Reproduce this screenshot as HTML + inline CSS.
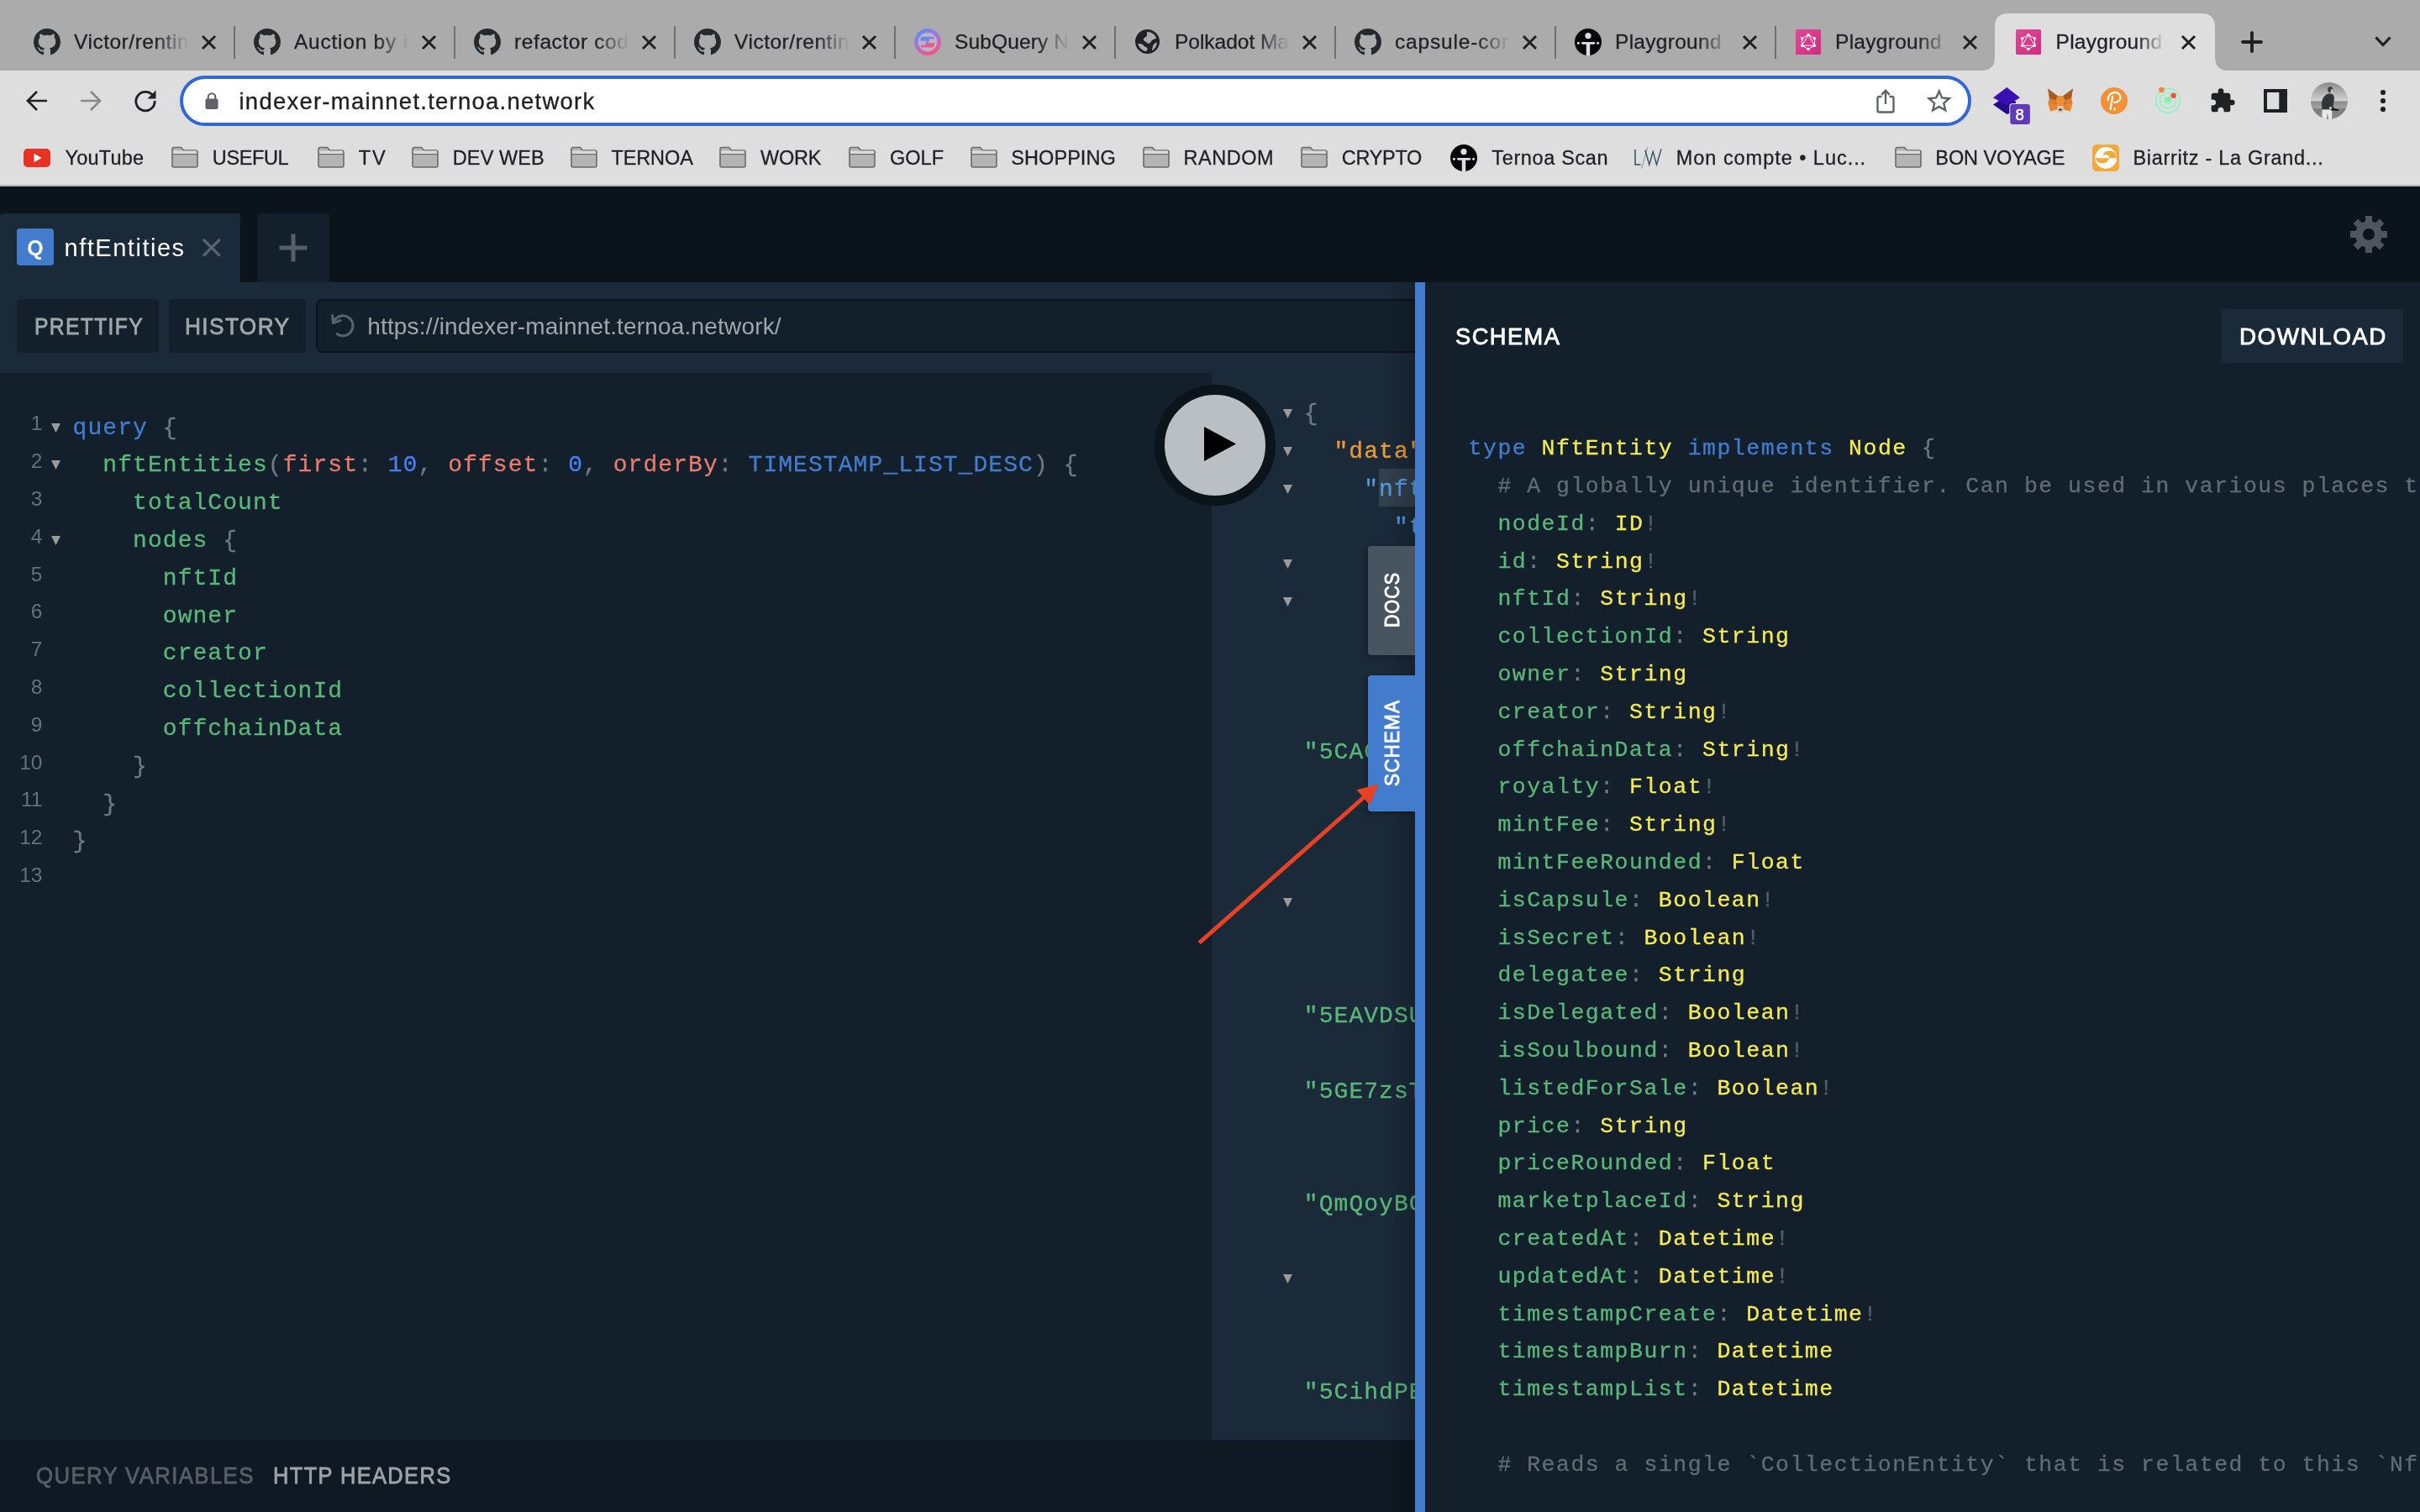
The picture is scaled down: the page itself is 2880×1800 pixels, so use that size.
<!DOCTYPE html>
<html lang="en"><head><meta charset="utf-8"><title>Playground - indexer-mainnet.ternoa.network</title>
<style>
html,body{margin:0;padding:0;width:2880px;height:1800px;overflow:hidden;background:#13202c;}
body{font-family:"Liberation Sans",sans-serif;position:relative;}
body div{position:absolute;white-space:pre;box-sizing:border-box;}
body svg{position:absolute;overflow:visible;}
.code{font-family:"Liberation Mono", monospace;-webkit-text-stroke:0.3px;}
#root{left:0;top:0;width:2880px;height:1800px;will-change:transform;transform-origin:0 0;}
@media (max-width:1600px){html,body{width:1440px;height:900px;}#root{transform:scale(0.5);}}
</style></head><body><div id="root">
<div style="left:0px;top:0px;width:2880px;height:84px;background:#ababab;"></div>
<div style="left:0px;top:84px;width:2880px;height:136px;background:#dedede;"></div>
<div style="left:0px;top:220px;width:2880px;height:2px;background:#b3b3b3;"></div>
<svg style="left:0;top:0" width="2880" height="84"><path d="M2358 84 Q2374 84 2374 68 V32 Q2374 16 2390 16 H2620 Q2636 16 2636 32 V68 Q2636 84 2652 84 Z" fill="#dedede"/></svg>
<svg style="left:39.5px;top:33.6px" width="32" height="32" viewBox="0 0 16 16"><path fill="#24292e" d="M8 0C3.58 0 0 3.58 0 8c0 3.54 2.29 6.53 5.47 7.59.4.07.55-.17.55-.38 0-.19-.01-.82-.01-1.49-2.01.37-2.53-.49-2.69-.94-.09-.23-.48-.94-.82-1.13-.28-.15-.68-.52-.01-.53.63-.01 1.08.58 1.23.82.72 1.21 1.87.87 2.33.66.07-.52.28-.87.51-1.07-1.78-.2-3.64-.89-3.64-3.95 0-.87.31-1.59.82-2.15-.08-.2-.36-1.02.08-2.12 0 0 .67-.21 2.2.82.64-.18 1.32-.27 2-.27.68 0 1.36.09 2 .27 1.53-1.04 2.2-.82 2.2-.82.44 1.1.16 1.92.08 2.12.51.56.82 1.27.82 2.15 0 3.07-1.87 3.75-3.65 3.95.29.25.54.73.54 1.48 0 1.07-.01 1.93-.01 2.2 0 .21.15.46.55.38A8.013 8.013 0 0016 8c0-4.42-3.58-8-8-8z"/></svg>
<div style="left:88.0px;top:38.1px;font-size:24.5px;line-height:24.5px;color:#1f2023;letter-spacing:0.52px;-webkit-text-stroke:0.3px;">Victor/rentin</div>
<div style="left:184.6px;top:34px;width:40px;height:34px;background:linear-gradient(90deg,rgba(171,171,171,0),rgba(171,171,171,1));"></div>
<svg style="left:240.0px;top:41.5px" width="17.0" height="17.0" viewBox="-8.5 -8.5 17.0 17.0"><path d="M-7.5 -7.5L7.5 7.5M7.5 -7.5L-7.5 7.5" stroke="#1f2023" stroke-width="2.9" fill="none"/></svg>
<div style="left:278px;top:31px;width:2px;height:39px;background:#6f6f6f;"></div>
<svg style="left:301.5px;top:33.6px" width="32" height="32" viewBox="0 0 16 16"><path fill="#24292e" d="M8 0C3.58 0 0 3.58 0 8c0 3.54 2.29 6.53 5.47 7.59.4.07.55-.17.55-.38 0-.19-.01-.82-.01-1.49-2.01.37-2.53-.49-2.69-.94-.09-.23-.48-.94-.82-1.13-.28-.15-.68-.52-.01-.53.63-.01 1.08.58 1.23.82.72 1.21 1.87.87 2.33.66.07-.52.28-.87.51-1.07-1.78-.2-3.64-.89-3.64-3.95 0-.87.31-1.59.82-2.15-.08-.2-.36-1.02.08-2.12 0 0 .67-.21 2.2.82.64-.18 1.32-.27 2-.27.68 0 1.36.09 2 .27 1.53-1.04 2.2-.82 2.2-.82.44 1.1.16 1.92.08 2.12.51.56.82 1.27.82 2.15 0 3.07-1.87 3.75-3.65 3.95.29.25.54.73.54 1.48 0 1.07-.01 1.93-.01 2.2 0 .21.15.46.55.38A8.013 8.013 0 0016 8c0-4.42-3.58-8-8-8z"/></svg>
<div style="left:350.0px;top:38.1px;font-size:24.5px;line-height:24.5px;color:#1f2023;letter-spacing:0.76px;-webkit-text-stroke:0.3px;">Auction by i</div>
<div style="left:446.6px;top:34px;width:40px;height:34px;background:linear-gradient(90deg,rgba(171,171,171,0),rgba(171,171,171,1));"></div>
<svg style="left:502.0px;top:41.5px" width="17.0" height="17.0" viewBox="-8.5 -8.5 17.0 17.0"><path d="M-7.5 -7.5L7.5 7.5M7.5 -7.5L-7.5 7.5" stroke="#1f2023" stroke-width="2.9" fill="none"/></svg>
<div style="left:540px;top:31px;width:2px;height:39px;background:#6f6f6f;"></div>
<svg style="left:563.5px;top:33.6px" width="32" height="32" viewBox="0 0 16 16"><path fill="#24292e" d="M8 0C3.58 0 0 3.58 0 8c0 3.54 2.29 6.53 5.47 7.59.4.07.55-.17.55-.38 0-.19-.01-.82-.01-1.49-2.01.37-2.53-.49-2.69-.94-.09-.23-.48-.94-.82-1.13-.28-.15-.68-.52-.01-.53.63-.01 1.08.58 1.23.82.72 1.21 1.87.87 2.33.66.07-.52.28-.87.51-1.07-1.78-.2-3.64-.89-3.64-3.95 0-.87.31-1.59.82-2.15-.08-.2-.36-1.02.08-2.12 0 0 .67-.21 2.2.82.64-.18 1.32-.27 2-.27.68 0 1.36.09 2 .27 1.53-1.04 2.2-.82 2.2-.82.44 1.1.16 1.92.08 2.12.51.56.82 1.27.82 2.15 0 3.07-1.87 3.75-3.65 3.95.29.25.54.73.54 1.48 0 1.07-.01 1.93-.01 2.2 0 .21.15.46.55.38A8.013 8.013 0 0016 8c0-4.42-3.58-8-8-8z"/></svg>
<div style="left:612.0px;top:38.1px;font-size:24.5px;line-height:24.5px;color:#1f2023;letter-spacing:0.60px;-webkit-text-stroke:0.3px;">refactor cod</div>
<div style="left:708.6px;top:34px;width:40px;height:34px;background:linear-gradient(90deg,rgba(171,171,171,0),rgba(171,171,171,1));"></div>
<svg style="left:764.0px;top:41.5px" width="17.0" height="17.0" viewBox="-8.5 -8.5 17.0 17.0"><path d="M-7.5 -7.5L7.5 7.5M7.5 -7.5L-7.5 7.5" stroke="#1f2023" stroke-width="2.9" fill="none"/></svg>
<div style="left:802px;top:31px;width:2px;height:39px;background:#6f6f6f;"></div>
<svg style="left:825.5px;top:33.6px" width="32" height="32" viewBox="0 0 16 16"><path fill="#24292e" d="M8 0C3.58 0 0 3.58 0 8c0 3.54 2.29 6.53 5.47 7.59.4.07.55-.17.55-.38 0-.19-.01-.82-.01-1.49-2.01.37-2.53-.49-2.69-.94-.09-.23-.48-.94-.82-1.13-.28-.15-.68-.52-.01-.53.63-.01 1.08.58 1.23.82.72 1.21 1.87.87 2.33.66.07-.52.28-.87.51-1.07-1.78-.2-3.64-.89-3.64-3.95 0-.87.31-1.59.82-2.15-.08-.2-.36-1.02.08-2.12 0 0 .67-.21 2.2.82.64-.18 1.32-.27 2-.27.68 0 1.36.09 2 .27 1.53-1.04 2.2-.82 2.2-.82.44 1.1.16 1.92.08 2.12.51.56.82 1.27.82 2.15 0 3.07-1.87 3.75-3.65 3.95.29.25.54.73.54 1.48 0 1.07-.01 1.93-.01 2.2 0 .21.15.46.55.38A8.013 8.013 0 0016 8c0-4.42-3.58-8-8-8z"/></svg>
<div style="left:874.0px;top:38.1px;font-size:24.5px;line-height:24.5px;color:#1f2023;letter-spacing:0.52px;-webkit-text-stroke:0.3px;">Victor/rentin</div>
<div style="left:970.6px;top:34px;width:40px;height:34px;background:linear-gradient(90deg,rgba(171,171,171,0),rgba(171,171,171,1));"></div>
<svg style="left:1026.0px;top:41.5px" width="17.0" height="17.0" viewBox="-8.5 -8.5 17.0 17.0"><path d="M-7.5 -7.5L7.5 7.5M7.5 -7.5L-7.5 7.5" stroke="#1f2023" stroke-width="2.9" fill="none"/></svg>
<div style="left:1064px;top:31px;width:2px;height:39px;background:#6f6f6f;"></div>
<svg style="left:1087.5px;top:33.6px" width="32" height="32" viewBox="0 0 32 32"><defs><linearGradient id="sq" x1="0.1" y1="0" x2="0.6" y2="1"><stop offset="0" stop-color="#4f8ff2"/><stop offset="0.5" stop-color="#a874d8"/><stop offset="1" stop-color="#f8557f"/></linearGradient></defs><circle cx="16" cy="16" r="16" fill="url(#sq)"/><circle cx="16" cy="16" r="11.200" fill="#b9b4c8"/><path d="M23.500 11H10L8.500 13.500H17L14.500 18.500H23L21.500 21H8" fill="none" stroke="url(#sq)" stroke-width="2.600" stroke-linejoin="round"/></svg>
<div style="left:1136.0px;top:38.1px;font-size:24.5px;line-height:24.5px;color:#1f2023;letter-spacing:0.13px;-webkit-text-stroke:0.3px;">SubQuery N</div>
<div style="left:1232.6px;top:34px;width:40px;height:34px;background:linear-gradient(90deg,rgba(171,171,171,0),rgba(171,171,171,1));"></div>
<svg style="left:1288.0px;top:41.5px" width="17.0" height="17.0" viewBox="-8.5 -8.5 17.0 17.0"><path d="M-7.5 -7.5L7.5 7.5M7.5 -7.5L-7.5 7.5" stroke="#1f2023" stroke-width="2.9" fill="none"/></svg>
<div style="left:1326px;top:31px;width:2px;height:39px;background:#6f6f6f;"></div>
<svg style="left:1351.0px;top:35.1px" width="29" height="29" viewBox="0 0 28 28"><circle cx="14" cy="14" r="14" fill="#202124"/><path d="M13.500 3c4.500-.5 9 2.500 10.800 7-1.800 1.700-3.800 1.200-5.300 2.700s-1.500 3.500-3.500 3.500-2.500-2-4.500-2.500c-1.500-.5-2-2-1-3.500s3-1.500 3.500-3.200c.3-1.300-.5-2.500 0-4z" fill="#ababab"/><path d="M3.200 16.500c2.500-.5 5 0 6.500 2s3.800 1.200 4.300 3.200-.8 2.800-1.500 3.600C8 24.500 4 21 3.200 16.500z" fill="#ababab"/><path d="M24.800 15c.2 3.500-2 7.500-5.300 9.300-.5-1.500.5-2.500.5-4s2-4.800 4.800-5.300z" fill="#ababab"/></svg>
<div style="left:1398.0px;top:38.1px;font-size:24.5px;line-height:24.5px;color:#1f2023;letter-spacing:-0.02px;-webkit-text-stroke:0.3px;">Polkadot Ma</div>
<div style="left:1494.6px;top:34px;width:40px;height:34px;background:linear-gradient(90deg,rgba(171,171,171,0),rgba(171,171,171,1));"></div>
<svg style="left:1550.0px;top:41.5px" width="17.0" height="17.0" viewBox="-8.5 -8.5 17.0 17.0"><path d="M-7.5 -7.5L7.5 7.5M7.5 -7.5L-7.5 7.5" stroke="#1f2023" stroke-width="2.9" fill="none"/></svg>
<div style="left:1588px;top:31px;width:2px;height:39px;background:#6f6f6f;"></div>
<svg style="left:1611.5px;top:33.6px" width="32" height="32" viewBox="0 0 16 16"><path fill="#24292e" d="M8 0C3.58 0 0 3.58 0 8c0 3.54 2.29 6.53 5.47 7.59.4.07.55-.17.55-.38 0-.19-.01-.82-.01-1.49-2.01.37-2.53-.49-2.69-.94-.09-.23-.48-.94-.82-1.13-.28-.15-.68-.52-.01-.53.63-.01 1.08.58 1.23.82.72 1.21 1.87.87 2.33.66.07-.52.28-.87.51-1.07-1.78-.2-3.64-.89-3.64-3.95 0-.87.31-1.59.82-2.15-.08-.2-.36-1.02.08-2.12 0 0 .67-.21 2.2.82.64-.18 1.32-.27 2-.27.68 0 1.36.09 2 .27 1.53-1.04 2.2-.82 2.2-.82.44 1.1.16 1.92.08 2.12.51.56.82 1.27.82 2.15 0 3.07-1.87 3.75-3.65 3.95.29.25.54.73.54 1.48 0 1.07-.01 1.93-.01 2.2 0 .21.15.46.55.38A8.013 8.013 0 0016 8c0-4.42-3.58-8-8-8z"/></svg>
<div style="left:1660.0px;top:38.1px;font-size:24.5px;line-height:24.5px;color:#1f2023;letter-spacing:0.84px;-webkit-text-stroke:0.3px;">capsule-cor</div>
<div style="left:1756.6px;top:34px;width:40px;height:34px;background:linear-gradient(90deg,rgba(171,171,171,0),rgba(171,171,171,1));"></div>
<svg style="left:1812.0px;top:41.5px" width="17.0" height="17.0" viewBox="-8.5 -8.5 17.0 17.0"><path d="M-7.5 -7.5L7.5 7.5M7.5 -7.5L-7.5 7.5" stroke="#1f2023" stroke-width="2.9" fill="none"/></svg>
<div style="left:1850px;top:31px;width:2px;height:39px;background:#6f6f6f;"></div>
<svg style="left:1873.5px;top:33.6px" width="32" height="32" viewBox="0 0 32 32"><circle cx="16" cy="16" r="16" fill="#08080c"/><circle cx="16" cy="8.600" r="3.600" fill="#dedede"/><rect x="8" y="15.900" width="16.200" height="2.800" rx="1.400" fill="#dedede"/><rect x="13.800" y="16" width="4.400" height="16" fill="#dedede"/><circle cx="4.400" cy="17.300" r="1.500" fill="#dedede"/><circle cx="27.600" cy="17.300" r="1.500" fill="#dedede"/></svg>
<div style="left:1922.0px;top:38.1px;font-size:24.5px;line-height:24.5px;color:#1f2023;letter-spacing:0.29px;-webkit-text-stroke:0.3px;">Playground</div>
<div style="left:2018.6px;top:34px;width:40px;height:34px;background:linear-gradient(90deg,rgba(171,171,171,0),rgba(171,171,171,1));"></div>
<svg style="left:2074.0px;top:41.5px" width="17.0" height="17.0" viewBox="-8.5 -8.5 17.0 17.0"><path d="M-7.5 -7.5L7.5 7.5M7.5 -7.5L-7.5 7.5" stroke="#1f2023" stroke-width="2.9" fill="none"/></svg>
<div style="left:2112px;top:31px;width:2px;height:39px;background:#6f6f6f;"></div>
<svg style="left:2136.5px;top:34.6px" width="30" height="30" viewBox="0 0 30 30"><defs><linearGradient id="gq1" x1="0" y1="0" x2="1" y2="1"><stop offset="0" stop-color="#e2479a"/><stop offset="1" stop-color="#cf2a80"/></linearGradient></defs><rect width="30" height="30" rx="1.500" fill="url(#gq1)"/><g fill="none" stroke="#fff" stroke-width="1"><polygon points="15,6.500 22.400,10.750 22.400,19.250 15,23.500 7.600,19.250 7.600,10.750"/><polygon points="15,6.500 22.400,19.250 7.600,19.250"/></g><g fill="#fff"><circle cx="15" cy="6.500" r="1.700"/><circle cx="22.400" cy="10.750" r="1.700"/><circle cx="22.400" cy="19.250" r="1.700"/><circle cx="15" cy="23.500" r="1.700"/><circle cx="7.600" cy="19.250" r="1.700"/><circle cx="7.600" cy="10.750" r="1.700"/></g></svg>
<div style="left:2184.0px;top:38.1px;font-size:24.5px;line-height:24.5px;color:#1f2023;letter-spacing:0.29px;-webkit-text-stroke:0.3px;">Playground</div>
<div style="left:2280.6px;top:34px;width:40px;height:34px;background:linear-gradient(90deg,rgba(171,171,171,0),rgba(171,171,171,1));"></div>
<svg style="left:2336.0px;top:41.5px" width="17.0" height="17.0" viewBox="-8.5 -8.5 17.0 17.0"><path d="M-7.5 -7.5L7.5 7.5M7.5 -7.5L-7.5 7.5" stroke="#1f2023" stroke-width="2.9" fill="none"/></svg>
<svg style="left:2399.0px;top:34.6px" width="30" height="30" viewBox="0 0 30 30"><defs><linearGradient id="gq2" x1="0" y1="0" x2="1" y2="1"><stop offset="0" stop-color="#e2479a"/><stop offset="1" stop-color="#cf2a80"/></linearGradient></defs><rect width="30" height="30" rx="1.500" fill="url(#gq2)"/><g fill="none" stroke="#fff" stroke-width="1"><polygon points="15,6.500 22.400,10.750 22.400,19.250 15,23.500 7.600,19.250 7.600,10.750"/><polygon points="15,6.500 22.400,19.250 7.600,19.250"/></g><g fill="#fff"><circle cx="15" cy="6.500" r="1.700"/><circle cx="22.400" cy="10.750" r="1.700"/><circle cx="22.400" cy="19.250" r="1.700"/><circle cx="15" cy="23.500" r="1.700"/><circle cx="7.600" cy="19.250" r="1.700"/><circle cx="7.600" cy="10.750" r="1.700"/></g></svg>
<div style="left:2446.5px;top:38.1px;font-size:24.5px;line-height:24.5px;color:#1f2023;letter-spacing:0.29px;-webkit-text-stroke:0.3px;">Playground</div>
<div style="left:2543px;top:34px;width:34px;height:34px;background:linear-gradient(90deg,rgba(222,222,222,0),rgba(222,222,222,1));"></div>
<svg style="left:2595.5px;top:41.5px" width="17.0" height="17.0" viewBox="-8.5 -8.5 17.0 17.0"><path d="M-7.5 -7.5L7.5 7.5M7.5 -7.5L-7.5 7.5" stroke="#1f2023" stroke-width="2.9" fill="none"/></svg>
<svg style="left:2667px;top:37px" width="26" height="26" viewBox="0 0 26 26"><path d="M13 2V24M2 13H24" stroke="#1f2023" stroke-width="3.800" fill="none" stroke-linecap="round"/></svg>
<svg style="left:2826px;top:43px" width="20" height="13" viewBox="0 0 20 13"><path d="M1.500 1.500L10 10.500L18.500 1.500" stroke="#1f2023" stroke-width="3.200" fill="none"/></svg>
<svg style="left:30px;top:106px" width="28" height="28" viewBox="0 0 28 28"><path d="M26 14H3.500M14 3L3 14L14 25" stroke="#202124" stroke-width="2.700" fill="none"/></svg>
<svg style="left:94px;top:106px" width="28" height="28" viewBox="0 0 28 28"><path d="M2 14H24.500M14 3L25 14L14 25" stroke="#8a8a8a" stroke-width="2.700" fill="none"/></svg>
<svg style="left:158px;top:105px" width="30" height="30" viewBox="0 0 30 30"><path d="M24.200 9.200A11.200 11.200 0 1 0 26.200 15" stroke="#202124" stroke-width="2.800" fill="none"/><path d="M27.500 2.500V12.500H17.500Z" fill="#202124"/></svg>
<div style="left:214px;top:90px;width:2132px;height:60px;background:#ffffff;border:4px solid #3367d6;border-radius:30px;"></div>
<svg style="left:244px;top:110.300px" width="16" height="20.500" viewBox="0 0 18 23"><rect x="0.500" y="8.500" width="17" height="14" rx="2.200" fill="#5f6368"/><path d="M4.200 9V6.200a4.800 4.800 0 0 1 9.600 0V9" stroke="#5f6368" stroke-width="2.400" fill="none"/></svg>
<div style="left:284.5px;top:106.9px;font-size:27.5px;line-height:27.5px;color:#202124;letter-spacing:1.24px;-webkit-text-stroke:0.3px;">indexer-mainnet.ternoa.network</div>
<svg style="left:2232px;top:104px" width="24" height="32" viewBox="0 0 24 32"><path d="M7.500 11H4.500a2 2 0 0 0-2 2V27.500a2 2 0 0 0 2 2H19.500a2 2 0 0 0 2-2V13a2 2 0 0 0-2-2H16.500" stroke="#5f6368" stroke-width="2.400" fill="none"/><path d="M12 20V4M7.200 8.800L12 3.800L16.800 8.800" stroke="#5f6368" stroke-width="2.400" fill="none"/></svg>
<svg style="left:2291.800px;top:104.600px" width="31.400" height="30.400" viewBox="0 0 24 24"><path d="M12 2.800l2.750 6.200 6.750.65-5.100 4.500 1.500 6.650L12 17.300l-5.900 3.500 1.500-6.650-5.100-4.500 6.750-.65z" stroke="#5f6368" stroke-width="1.900" fill="none" stroke-linejoin="miter"/></svg>
<svg style="left:2370px;top:100px" width="48" height="50" viewBox="0 0 48 50"><path d="M2 24.500L18.300 14L29 21V33L18.300 36Z" fill="#230a8c"/><path d="M2 16.300L18.300 3.900L34 16.300L18.300 25.500Z" fill="#3a0fb3"/><rect x="21.300" y="23" width="25.200" height="25.500" rx="3.500" fill="#dedede"/><rect x="22.300" y="24" width="23.600" height="24" rx="3" fill="#603ab7"/></svg>
<div style="left:2398.5px;top:127.6px;font-size:18.5px;line-height:18.5px;color:#ffffff;-webkit-text-stroke:0.5px;">8</div>
<svg style="left:2436px;top:104.500px" width="32" height="31" viewBox="0 0 32 31"><path d="M1 0.500L12.800 9.200H19.200L31 0.500L29 12L30.500 18.500L28 27.500L20 25.300L18 28.500H14L12 25.300L4 27.500L1.500 18.500L3 12Z" fill="#e88a35"/><path d="M1 0.500L12.800 9.200L10.500 14.500L3 12Z" fill="#a85a26"/><path d="M31 0.500L19.200 9.200L21.500 14.500L29 12Z" fill="#a85a26"/><path d="M10.500 14.500L12.800 9.200H19.200L21.500 14.500L19.500 21H12.500Z" fill="#ec8f3a"/><path d="M3 12L10.500 14.500L12.500 21L9 19.500L1.500 18.500Z" fill="#e27f2c"/><path d="M29 12L21.500 14.500L19.500 21L23 19.500L30.500 18.500Z" fill="#e27f2c"/><path d="M4 27.500L9 19.500L12.500 21L12 25.300Z" fill="#e58531"/><path d="M28 27.500L23 19.500L19.500 21L20 25.300Z" fill="#e58531"/><path d="M12.500 21H19.500L20 25.300L18 28.500H14L12 25.300Z" fill="#dcc3ae"/><path d="M14 24.800h4l-.6 1.700h-2.800z" fill="#1f1f1f"/><path d="M9.500 17.200l2.500.6-1.200 1.100zM22.500 17.200l-2.500.6 1.200 1.100z" fill="#3b5a82"/></svg>
<svg style="left:2500px;top:104px" width="32" height="32" viewBox="0 0 32 32"><circle cx="16" cy="16" r="16" fill="#f29135"/><path d="M8.800 15C8.400 11 11 7 15.500 6.200c4.200-.7 7.800 1.600 8 5.300.2 3.900-3.200 6.600-7.200 6.300M14.200 10.800L11.600 26" stroke="#fff" stroke-width="2.200" fill="none" stroke-linecap="round"/><circle cx="16.500" cy="26" r="1.400" fill="#fff"/></svg>
<svg style="left:2563px;top:103px" width="34" height="34" viewBox="0 0 34 34"><defs><linearGradient id="go" x1="0" y1="0" x2="0" y2="1"><stop offset="0" stop-color="#7df08c"/><stop offset="1" stop-color="#8ff7d8"/></linearGradient></defs><circle cx="17" cy="16.800" r="14.300" stroke="#83f6bf" stroke-width="1.500" fill="none"/><circle cx="17" cy="16.800" r="9.200" stroke="#8cf5c8" stroke-width="1.400" fill="none"/><circle cx="17" cy="16.800" r="4.500" fill="url(#go)"/><circle cx="9.400" cy="4" r="3.300" fill="#ee8a3c"/><circle cx="23.600" cy="10.800" r="3.200" fill="#e8543e"/></svg>
<svg style="left:2628.500px;top:103.500px" width="32" height="32" viewBox="0 0 24 24"><path d="M20.500 11H19V7c0-1.100-.9-2-2-2h-4V3.500a2.500 2.500 0 0 0-5 0V5H4c-1.100 0-1.990.9-1.990 2v3.800H3.500c1.490 0 2.700 1.210 2.700 2.700s-1.210 2.700-2.700 2.700H2V20c0 1.100.9 2 2 2h3.800v-1.500c0-1.490 1.210-2.700 2.700-2.700 1.490 0 2.700 1.210 2.700 2.700V22H17c1.100 0 2-.9 2-2v-4h1.500a2.500 2.500 0 0 0 0-5z" fill="#202124"/></svg>
<svg style="left:2694px;top:106px" width="28" height="28" viewBox="0 0 28 28"><rect width="28" height="28" fill="#202124"/><rect x="4" y="4" width="14.300" height="20" fill="#dedede"/></svg>
<svg style="left:2750px;top:98px" width="44" height="44" viewBox="0 0 44 44"><defs><linearGradient id="av" x1="0" y1="0" x2="0" y2="1"><stop offset="0" stop-color="#8a8a8a"/><stop offset="0.5" stop-color="#d2d2d2"/><stop offset="0.52" stop-color="#8c8c8c"/><stop offset="0.7" stop-color="#a4a4a4"/><stop offset="0.72" stop-color="#7a7a7a"/><stop offset="1" stop-color="#8e8e8e"/></linearGradient><clipPath id="avc"><circle cx="22" cy="22" r="22"/></clipPath></defs><circle cx="22" cy="22" r="22" fill="url(#av)"/><g clip-path="url(#avc)"><ellipse cx="23.200" cy="8.800" rx="3" ry="3.600" fill="#3a3a3a"/><path d="M24.500 7.500a2.500 3 0 0 1 0 5.500h-1.500z" fill="#c9c9c9"/><path d="M13 25c.5-6 3.500-10.500 8.500-11.500 4-.5 6.500 1.500 6.500 6l-1.500 9 3 4h-16z" fill="#333438"/><path d="M13.500 32.500h12l-.5 12h-3.500l-1.500-8-1.500 8h-5z" fill="#e9e9e9"/><path d="M24 30.500l9 1.500v2l-9-.5z" fill="#1f1f1f"/><circle cx="23.500" cy="30.500" r="1.600" fill="#d9d9d9"/></g></svg>
<svg style="left:2832px;top:106px" width="8" height="28" viewBox="0 0 8 28"><circle cx="4" cy="4" r="3.100" fill="#202124"/><circle cx="4" cy="14" r="3.100" fill="#202124"/><circle cx="4" cy="24" r="3.100" fill="#202124"/></svg>
<svg style="left:28px;top:177px" width="32" height="22" viewBox="0 0 32 22"><rect width="32" height="22" rx="5" fill="#e83223"/><path d="M12.500 5.800L21.500 11L12.500 16.200Z" fill="#fff"/></svg>
<div style="left:77.6px;top:177.1px;font-size:23.5px;line-height:23.5px;color:#1f2023;letter-spacing:0.19px;-webkit-text-stroke:0.3px;">YouTube</div>
<svg style="left:204px;top:173.500px" width="32" height="26" viewBox="0 0 32 26"><path d="M1 3.500a2 2 0 0 1 2-2h8.500l3 3.500H29a2 2 0 0 1 2 2V23a2 2 0 0 1-2 2H3a2 2 0 0 1-2-2z" fill="#b4b4b4" stroke="#6b6b6b" stroke-width="1.600"/><path d="M1.500 9.500H30.500" stroke="#6b6b6b" stroke-width="1.400"/><path d="M2 5.500h28v3.500H2z" fill="#dcdcdc"/></svg>
<div style="left:252.8px;top:177.1px;font-size:23.5px;line-height:23.5px;color:#1f2023;letter-spacing:-0.38px;-webkit-text-stroke:0.3px;">USEFUL</div>
<svg style="left:378px;top:173.500px" width="32" height="26" viewBox="0 0 32 26"><path d="M1 3.500a2 2 0 0 1 2-2h8.500l3 3.500H29a2 2 0 0 1 2 2V23a2 2 0 0 1-2 2H3a2 2 0 0 1-2-2z" fill="#b4b4b4" stroke="#6b6b6b" stroke-width="1.600"/><path d="M1.500 9.500H30.500" stroke="#6b6b6b" stroke-width="1.400"/><path d="M2 5.500h28v3.500H2z" fill="#dcdcdc"/></svg>
<div style="left:426.8px;top:177.1px;font-size:23.5px;line-height:23.5px;color:#1f2023;letter-spacing:1.97px;-webkit-text-stroke:0.3px;">TV</div>
<svg style="left:490px;top:173.500px" width="32" height="26" viewBox="0 0 32 26"><path d="M1 3.500a2 2 0 0 1 2-2h8.500l3 3.500H29a2 2 0 0 1 2 2V23a2 2 0 0 1-2 2H3a2 2 0 0 1-2-2z" fill="#b4b4b4" stroke="#6b6b6b" stroke-width="1.600"/><path d="M1.500 9.500H30.500" stroke="#6b6b6b" stroke-width="1.400"/><path d="M2 5.500h28v3.500H2z" fill="#dcdcdc"/></svg>
<div style="left:538.8px;top:177.1px;font-size:23.5px;line-height:23.5px;color:#1f2023;letter-spacing:0.10px;-webkit-text-stroke:0.3px;">DEV WEB</div>
<svg style="left:678.6px;top:173.500px" width="32" height="26" viewBox="0 0 32 26"><path d="M1 3.500a2 2 0 0 1 2-2h8.500l3 3.500H29a2 2 0 0 1 2 2V23a2 2 0 0 1-2 2H3a2 2 0 0 1-2-2z" fill="#b4b4b4" stroke="#6b6b6b" stroke-width="1.600"/><path d="M1.500 9.500H30.500" stroke="#6b6b6b" stroke-width="1.400"/><path d="M2 5.500h28v3.500H2z" fill="#dcdcdc"/></svg>
<div style="left:727.4px;top:177.1px;font-size:23.5px;line-height:23.5px;color:#1f2023;letter-spacing:-0.09px;-webkit-text-stroke:0.3px;">TERNOA</div>
<svg style="left:856.2px;top:173.500px" width="32" height="26" viewBox="0 0 32 26"><path d="M1 3.500a2 2 0 0 1 2-2h8.500l3 3.500H29a2 2 0 0 1 2 2V23a2 2 0 0 1-2 2H3a2 2 0 0 1-2-2z" fill="#b4b4b4" stroke="#6b6b6b" stroke-width="1.600"/><path d="M1.500 9.500H30.500" stroke="#6b6b6b" stroke-width="1.400"/><path d="M2 5.500h28v3.500H2z" fill="#dcdcdc"/></svg>
<div style="left:905.0px;top:177.1px;font-size:23.5px;line-height:23.5px;color:#1f2023;letter-spacing:-0.20px;-webkit-text-stroke:0.3px;">WORK</div>
<svg style="left:1010.2px;top:173.500px" width="32" height="26" viewBox="0 0 32 26"><path d="M1 3.500a2 2 0 0 1 2-2h8.500l3 3.500H29a2 2 0 0 1 2 2V23a2 2 0 0 1-2 2H3a2 2 0 0 1-2-2z" fill="#b4b4b4" stroke="#6b6b6b" stroke-width="1.600"/><path d="M1.500 9.500H30.500" stroke="#6b6b6b" stroke-width="1.400"/><path d="M2 5.500h28v3.500H2z" fill="#dcdcdc"/></svg>
<div style="left:1059.0px;top:177.1px;font-size:23.5px;line-height:23.5px;color:#1f2023;letter-spacing:0.01px;-webkit-text-stroke:0.3px;">GOLF</div>
<svg style="left:1154.5px;top:173.500px" width="32" height="26" viewBox="0 0 32 26"><path d="M1 3.500a2 2 0 0 1 2-2h8.500l3 3.500H29a2 2 0 0 1 2 2V23a2 2 0 0 1-2 2H3a2 2 0 0 1-2-2z" fill="#b4b4b4" stroke="#6b6b6b" stroke-width="1.600"/><path d="M1.500 9.500H30.500" stroke="#6b6b6b" stroke-width="1.400"/><path d="M2 5.500h28v3.500H2z" fill="#dcdcdc"/></svg>
<div style="left:1203.3px;top:177.1px;font-size:23.5px;line-height:23.5px;color:#1f2023;letter-spacing:0.06px;-webkit-text-stroke:0.3px;">SHOPPING</div>
<svg style="left:1359.8px;top:173.500px" width="32" height="26" viewBox="0 0 32 26"><path d="M1 3.500a2 2 0 0 1 2-2h8.500l3 3.500H29a2 2 0 0 1 2 2V23a2 2 0 0 1-2 2H3a2 2 0 0 1-2-2z" fill="#b4b4b4" stroke="#6b6b6b" stroke-width="1.600"/><path d="M1.500 9.500H30.500" stroke="#6b6b6b" stroke-width="1.400"/><path d="M2 5.500h28v3.500H2z" fill="#dcdcdc"/></svg>
<div style="left:1408.6px;top:177.1px;font-size:23.5px;line-height:23.5px;color:#1f2023;letter-spacing:0.51px;-webkit-text-stroke:0.3px;">RANDOM</div>
<svg style="left:1548px;top:173.500px" width="32" height="26" viewBox="0 0 32 26"><path d="M1 3.500a2 2 0 0 1 2-2h8.500l3 3.500H29a2 2 0 0 1 2 2V23a2 2 0 0 1-2 2H3a2 2 0 0 1-2-2z" fill="#b4b4b4" stroke="#6b6b6b" stroke-width="1.600"/><path d="M1.500 9.500H30.500" stroke="#6b6b6b" stroke-width="1.400"/><path d="M2 5.500h28v3.500H2z" fill="#dcdcdc"/></svg>
<div style="left:1596.8px;top:177.1px;font-size:23.5px;line-height:23.5px;color:#1f2023;letter-spacing:-0.32px;-webkit-text-stroke:0.3px;">CRYPTO</div>
<svg style="left:2254.5px;top:173.500px" width="32" height="26" viewBox="0 0 32 26"><path d="M1 3.500a2 2 0 0 1 2-2h8.500l3 3.500H29a2 2 0 0 1 2 2V23a2 2 0 0 1-2 2H3a2 2 0 0 1-2-2z" fill="#b4b4b4" stroke="#6b6b6b" stroke-width="1.600"/><path d="M1.500 9.500H30.500" stroke="#6b6b6b" stroke-width="1.400"/><path d="M2 5.500h28v3.500H2z" fill="#dcdcdc"/></svg>
<div style="left:2303.3px;top:177.1px;font-size:23.5px;line-height:23.5px;color:#1f2023;letter-spacing:-0.09px;-webkit-text-stroke:0.3px;">BON VOYAGE</div>
<svg style="left:1726.0px;top:172.0px" width="32" height="32" viewBox="0 0 32 32"><circle cx="16" cy="16" r="16" fill="#08080c"/><circle cx="16" cy="8.600" r="3.600" fill="#dedede"/><rect x="8" y="15.900" width="16.200" height="2.800" rx="1.400" fill="#dedede"/><rect x="13.800" y="16" width="4.400" height="16" fill="#dedede"/><circle cx="4.400" cy="17.300" r="1.500" fill="#dedede"/><circle cx="27.600" cy="17.300" r="1.500" fill="#dedede"/></svg>
<div style="left:1775.3px;top:177.1px;font-size:23.5px;line-height:23.5px;color:#1f2023;letter-spacing:0.64px;-webkit-text-stroke:0.3px;">Ternoa Scan</div>
<svg style="left:1944px;top:172px" width="36" height="32" viewBox="0 0 36 32"><path d="M2 6V24H8.500" stroke="#2f5166" stroke-width="1.500" fill="none"/><path d="M17 3L9.500 28.500" stroke="#7c9aab" stroke-width="1" fill="none"/><path d="M13.800 6.500L18.800 24L23.200 8.500L27.500 24L33 5.500" stroke="#2f5166" stroke-width="1.400" fill="none"/></svg>
<div style="left:1994.8px;top:177.1px;font-size:23.5px;line-height:23.5px;color:#1f2023;letter-spacing:0.96px;-webkit-text-stroke:0.3px;">Mon compte • Luc...</div>
<svg style="left:2490px;top:172px" width="32" height="32" viewBox="0 0 32 32"><rect width="32" height="32" rx="5.500" fill="#f2a93b"/><circle cx="16.200" cy="16" r="12.900" fill="#fff"/><path d="M29.100 16.200H20.200C21 13.300 17.400 11.300 13.300 12.900C12.600 10.400 16 7.800 20.500 7.600C25.500 7.500 28.500 11.500 29.100 16.200Z" fill="#f2a93b"/><path d="M3.300 16.200H20.200C19.600 19.600 16 22.400 11.500 22.200C7.500 22 4.500 19.600 3.300 16.200Z" fill="#f2a93b"/></svg>
<div style="left:2538.4px;top:177.1px;font-size:23.5px;line-height:23.5px;color:#1f2023;letter-spacing:0.71px;-webkit-text-stroke:0.3px;">Biarritz - La Grand...</div>
<div style="left:0px;top:222px;width:2880px;height:114px;background:#0b141b;"></div>
<div style="left:0px;top:336px;width:1684px;height:108px;background:#1b2a39;"></div>
<div style="left:0px;top:444px;width:1442px;height:1270px;background:#13202c;"></div>
<div style="left:1442px;top:444px;width:242px;height:1270px;background:#1b2a39;"></div>
<div style="left:0px;top:1714px;width:1684px;height:86px;background:#0e1923;"></div>
<div style="left:0px;top:254px;width:286px;height:82px;background:#1b2a39;border-radius:4px 4px 0 0;"></div>
<div style="left:20px;top:272px;width:44px;height:44px;background:#437ccd;border-radius:4px;"></div>
<div style="left:20.0px;top:283.3px;font-size:25px;line-height:25px;color:#ffffff;font-weight:700;width:44px;text-align:center;">Q</div>
<div style="left:76.6px;top:281.0px;font-size:29px;line-height:29px;color:#ffffff;letter-spacing:1.51px;">nftEntities</div>
<svg style="left:241.2px;top:283.7px" width="21.6" height="21.6" viewBox="-10.8 -10.8 21.6 21.6"><path d="M-9.8 -9.8L9.8 9.8M9.8 -9.8L-9.8 9.8" stroke="#58636e" stroke-width="3.4" fill="none"/></svg>
<div style="left:306px;top:254px;width:86px;height:82px;background:#13202c;border-radius:4px 4px 0 0;"></div>
<svg style="left:332px;top:278px" width="34" height="34" viewBox="0 0 34 34"><path d="M17 0.500V33.500M0.500 17H33.500" stroke="#555e67" stroke-width="5" fill="none"/></svg>
<svg style="left:2797px;top:257px" width="44" height="44" viewBox="-22 -22 44 44"><g fill="#4f565b"><rect x="-4" y="-22" width="8" height="12" transform="rotate(0)"/><rect x="-4" y="-22" width="8" height="12" transform="rotate(45)"/><rect x="-4" y="-22" width="8" height="12" transform="rotate(90)"/><rect x="-4" y="-22" width="8" height="12" transform="rotate(135)"/><rect x="-4" y="-22" width="8" height="12" transform="rotate(180)"/><rect x="-4" y="-22" width="8" height="12" transform="rotate(225)"/><rect x="-4" y="-22" width="8" height="12" transform="rotate(270)"/><rect x="-4" y="-22" width="8" height="12" transform="rotate(315)"/></g><circle r="11.500" fill="none" stroke="#4f565b" stroke-width="9"/></svg>
<div style="left:20px;top:356px;width:169px;height:64px;background:#13202c;border-radius:4px;"></div>
<div style="left:40.5px;top:374.8px;font-size:28px;line-height:28px;color:#a0a6aa;letter-spacing:1.5px;transform:scaleX(0.8818);transform-origin:0 0;-webkit-text-stroke:0.85px;">PRETTIFY</div>
<div style="left:201px;top:356px;width:163px;height:64px;background:#13202c;border-radius:4px;"></div>
<div style="left:219.8px;top:374.8px;font-size:28px;line-height:28px;color:#a0a6aa;letter-spacing:1.5px;transform:scaleX(0.9362);transform-origin:0 0;-webkit-text-stroke:0.85px;">HISTORY</div>
<div style="left:376px;top:356px;width:1320px;height:64px;background:#13202c;border:2px solid #0b141b;border-radius:8px;"></div>
<svg style="left:391.500px;top:371px" width="32" height="32" viewBox="0 0 32 32"><path d="M6.500 9.500A12 12 0 1 1 9 26.500" stroke="#59636b" stroke-width="3" fill="none" stroke-linecap="round"/><path d="M3.500 4.500L4.500 13.500L13 10.500" stroke="#59636b" stroke-width="3" fill="none" stroke-linecap="round" stroke-linejoin="round"/></svg>
<div style="left:437.2px;top:374.8px;font-size:28px;line-height:28px;color:#a0a6aa;letter-spacing:0.18px;">https://indexer-mainnet.ternoa.network/</div>
<div style="left:0.0px;top:492.3px;font-size:24.5px;line-height:24.5px;color:#677078;width:50.500px;text-align:right;">1</div>
<div class="code" style="left:86.6px;top:495.5px;font-size:28px;line-height:28px;letter-spacing:1.06px;"><span style="color:#437ccd">query</span><span style="color:#717980"> {</span></div>
<svg style="left:61.0px;top:503.5px" width="11" height="11" viewBox="0 0 11 11"><path d="M0 0H11L5.5 11Z" fill="#9a9a9a"/></svg>
<div style="left:0.0px;top:537.1px;font-size:24.5px;line-height:24.5px;color:#677078;width:50.500px;text-align:right;">2</div>
<div class="code" style="left:86.6px;top:540.3px;font-size:28px;line-height:28px;letter-spacing:1.06px;"><span style="color:#5bb679">  nftEntities</span><span style="color:#717980">(</span><span style="color:#e77b6c">first</span><span style="color:#717980">: </span><span style="color:#4480f1">10</span><span style="color:#717980">, </span><span style="color:#e77b6c">offset</span><span style="color:#717980">: </span><span style="color:#4480f1">0</span><span style="color:#717980">, </span><span style="color:#e77b6c">orderBy</span><span style="color:#717980">: </span><span style="color:#437ccd">TIMESTAMP_LIST_DESC</span><span style="color:#717980">) {</span></div>
<svg style="left:61.0px;top:548.3px" width="11" height="11" viewBox="0 0 11 11"><path d="M0 0H11L5.5 11Z" fill="#9a9a9a"/></svg>
<div style="left:0.0px;top:581.9px;font-size:24.5px;line-height:24.5px;color:#677078;width:50.500px;text-align:right;">3</div>
<div class="code" style="left:86.6px;top:585.1px;font-size:28px;line-height:28px;letter-spacing:1.06px;"><span style="color:#5bb679">    totalCount</span></div>
<div style="left:0.0px;top:626.7px;font-size:24.5px;line-height:24.5px;color:#677078;width:50.500px;text-align:right;">4</div>
<div class="code" style="left:86.6px;top:629.9px;font-size:28px;line-height:28px;letter-spacing:1.06px;"><span style="color:#5bb679">    nodes</span><span style="color:#717980"> {</span></div>
<svg style="left:61.0px;top:637.9px" width="11" height="11" viewBox="0 0 11 11"><path d="M0 0H11L5.5 11Z" fill="#9a9a9a"/></svg>
<div style="left:0.0px;top:671.5px;font-size:24.5px;line-height:24.5px;color:#677078;width:50.500px;text-align:right;">5</div>
<div class="code" style="left:86.6px;top:674.7px;font-size:28px;line-height:28px;letter-spacing:1.06px;"><span style="color:#5bb679">      nftId</span></div>
<div style="left:0.0px;top:716.3px;font-size:24.5px;line-height:24.5px;color:#677078;width:50.500px;text-align:right;">6</div>
<div class="code" style="left:86.6px;top:719.5px;font-size:28px;line-height:28px;letter-spacing:1.06px;"><span style="color:#5bb679">      owner</span></div>
<div style="left:0.0px;top:761.1px;font-size:24.5px;line-height:24.5px;color:#677078;width:50.500px;text-align:right;">7</div>
<div class="code" style="left:86.6px;top:764.3px;font-size:28px;line-height:28px;letter-spacing:1.06px;"><span style="color:#5bb679">      creator</span></div>
<div style="left:0.0px;top:805.9px;font-size:24.5px;line-height:24.5px;color:#677078;width:50.500px;text-align:right;">8</div>
<div class="code" style="left:86.6px;top:809.1px;font-size:28px;line-height:28px;letter-spacing:1.06px;"><span style="color:#5bb679">      collectionId</span></div>
<div style="left:0.0px;top:850.7px;font-size:24.5px;line-height:24.5px;color:#677078;width:50.500px;text-align:right;">9</div>
<div class="code" style="left:86.6px;top:853.9px;font-size:28px;line-height:28px;letter-spacing:1.06px;"><span style="color:#5bb679">      offchainData</span></div>
<div style="left:0.0px;top:895.5px;font-size:24.5px;line-height:24.5px;color:#677078;width:50.500px;text-align:right;">10</div>
<div class="code" style="left:86.6px;top:898.7px;font-size:28px;line-height:28px;letter-spacing:1.06px;"><span style="color:#717980">    }</span></div>
<div style="left:0.0px;top:940.3px;font-size:24.5px;line-height:24.5px;color:#677078;width:50.500px;text-align:right;">11</div>
<div class="code" style="left:86.6px;top:943.5px;font-size:28px;line-height:28px;letter-spacing:1.06px;"><span style="color:#717980">  }</span></div>
<div style="left:0.0px;top:985.1px;font-size:24.5px;line-height:24.5px;color:#677078;width:50.500px;text-align:right;">12</div>
<div class="code" style="left:86.6px;top:988.3px;font-size:28px;line-height:28px;letter-spacing:1.06px;"><span style="color:#717980">}</span></div>
<div style="left:0.0px;top:1029.9px;font-size:24.5px;line-height:24.5px;color:#677078;width:50.500px;text-align:right;">13</div>
<div style="left:1374px;top:458px;width:144px;height:144px;background:#babfc3;border:12px solid #0b141b;border-radius:50%;"></div>
<svg style="left:1433px;top:508px" width="38" height="41" viewBox="0 0 38 41"><path d="M0 0L38 20.500L0 41Z" fill="#000"/></svg>
<svg style="left:1526.9px;top:487.0px" width="11" height="11" viewBox="0 0 11 11"><path d="M0 0H11L5.5 11Z" fill="#9a9a9a"/></svg>
<svg style="left:1526.9px;top:531.8px" width="11" height="11" viewBox="0 0 11 11"><path d="M0 0H11L5.5 11Z" fill="#9a9a9a"/></svg>
<svg style="left:1526.9px;top:576.6px" width="11" height="11" viewBox="0 0 11 11"><path d="M0 0H11L5.5 11Z" fill="#9a9a9a"/></svg>
<svg style="left:1526.9px;top:666.2px" width="11" height="11" viewBox="0 0 11 11"><path d="M0 0H11L5.5 11Z" fill="#9a9a9a"/></svg>
<svg style="left:1526.9px;top:711.0px" width="11" height="11" viewBox="0 0 11 11"><path d="M0 0H11L5.5 11Z" fill="#9a9a9a"/></svg>
<svg style="left:1526.9px;top:1069.4px" width="11" height="11" viewBox="0 0 11 11"><path d="M0 0H11L5.5 11Z" fill="#9a9a9a"/></svg>
<svg style="left:1526.9px;top:1517.4px" width="11" height="11" viewBox="0 0 11 11"><path d="M0 0H11L5.5 11Z" fill="#9a9a9a"/></svg>
<div class="code" style="left:1551.8px;top:479.1px;font-size:28px;line-height:28px;letter-spacing:1.06px;"><span style="color:#717980">{</span></div>
<div class="code" style="left:1587.5px;top:523.9px;font-size:28px;line-height:28px;letter-spacing:1.06px;"><span style="color:#ea9a38">&quot;data&quot;</span></div>
<div style="left:1641px;top:558px;width:60px;height:45px;background:#323f4c;"></div>
<div class="code" style="left:1623.2px;top:568.7px;font-size:28px;line-height:28px;letter-spacing:1.06px;"><span style="color:#5599dd">&quot;nftE</span></div>
<div class="code" style="left:1659.0px;top:613.5px;font-size:28px;line-height:28px;letter-spacing:1.06px;"><span style="color:#5599dd">&quot;to</span></div>
<div class="code" style="left:1551.8px;top:882.3px;font-size:28px;line-height:28px;letter-spacing:1.06px;"><span style="color:#5bb679">&quot;5CAGp</span></div>
<div class="code" style="left:1551.8px;top:1195.9px;font-size:28px;line-height:28px;letter-spacing:1.06px;"><span style="color:#5bb679">&quot;5EAVDSU</span></div>
<div class="code" style="left:1551.8px;top:1285.5px;font-size:28px;line-height:28px;letter-spacing:1.06px;"><span style="color:#5bb679">&quot;5GE7zsT</span></div>
<div class="code" style="left:1551.8px;top:1419.9px;font-size:28px;line-height:28px;letter-spacing:1.06px;"><span style="color:#5bb679">&quot;QmQoyBC</span></div>
<div class="code" style="left:1551.8px;top:1643.9px;font-size:28px;line-height:28px;letter-spacing:1.06px;"><span style="color:#5bb679">&quot;5CihdPE</span></div>
<div style="left:1652px;top:336px;width:32px;height:1464px;background:linear-gradient(90deg,rgba(0,0,0,0),rgba(0,0,0,0.18));"></div>
<div style="left:1628px;top:650px;width:56px;height:130px;background:#485460;border-radius:4px 0 0 4px;box-shadow:-2px 2px 6px rgba(0,0,0,0.3);"></div>
<div style="left:1628px;top:804px;width:56px;height:162px;background:#437ccd;border-radius:4px 0 0 4px;box-shadow:-2px 2px 6px rgba(0,0,0,0.3);"></div>
<div style="left:1656.5px;top:715px;width:0;height:0;transform:rotate(-90deg);"><div style="left:-32.5px;top:-12.0px;font-size:24px;line-height:24px;color:#fff;letter-spacing:1.2px;-webkit-text-stroke:0.9px;transform:scaleX(0.8911);transform-origin:0 50%;">DOCS</div></div>
<div style="left:1656.5px;top:885px;width:0;height:0;transform:rotate(-90deg);"><div style="left:-51.0px;top:-12.0px;font-size:24px;line-height:24px;color:#fff;letter-spacing:1.2px;-webkit-text-stroke:0.9px;transform:scaleX(0.9385);transform-origin:0 50%;">SCHEMA</div></div>
<div style="left:1684px;top:336px;width:12px;height:1464px;background:#437ccd;"></div>
<div style="left:1696px;top:336px;width:1184px;height:1464px;background:#13202c;overflow:hidden;"></div>
<div style="left:1732.3px;top:387.3px;font-size:28px;line-height:28px;color:#ffffff;letter-spacing:1.5px;transform:scaleX(0.9741);transform-origin:0 0;-webkit-text-stroke:0.85px;">SCHEMA</div>
<div style="left:2644px;top:368px;width:216px;height:64px;background:#1b2a39;border-radius:4px;"></div>
<div style="left:2664.8px;top:386.7px;font-size:28px;line-height:28px;color:#ffffff;letter-spacing:1.5px;transform:scaleX(0.9948);transform-origin:0 0;-webkit-text-stroke:0.85px;">DOWNLOAD</div>
<div class="code" style="left:1747.6px;top:521.1px;font-size:26.5px;line-height:26.5px;letter-spacing:1.50px;"><span style="color:#437ccd">type</span><span style="color:#f6ea54"> NftEntity</span><span style="color:#437ccd"> implements</span><span style="color:#f6ea54"> Node</span><span style="color:#717980"> {</span></div>
<div class="code" style="left:1747.6px;top:565.9px;font-size:26.5px;line-height:26.5px;letter-spacing:1.50px;"><span style="color:#636b73">  # A globally unique identifier. Can be used in various places t</span></div>
<div class="code" style="left:1747.6px;top:610.7px;font-size:26.5px;line-height:26.5px;letter-spacing:1.50px;"><span style="color:#5bb679">  nodeId</span><span style="color:#717980">: </span><span style="color:#f6ea54">ID</span><span style="color:#555e67">!</span></div>
<div class="code" style="left:1747.6px;top:655.5px;font-size:26.5px;line-height:26.5px;letter-spacing:1.50px;"><span style="color:#5bb679">  id</span><span style="color:#717980">: </span><span style="color:#f6ea54">String</span><span style="color:#555e67">!</span></div>
<div class="code" style="left:1747.6px;top:700.3px;font-size:26.5px;line-height:26.5px;letter-spacing:1.50px;"><span style="color:#5bb679">  nftId</span><span style="color:#717980">: </span><span style="color:#f6ea54">String</span><span style="color:#555e67">!</span></div>
<div class="code" style="left:1747.6px;top:745.1px;font-size:26.5px;line-height:26.5px;letter-spacing:1.50px;"><span style="color:#5bb679">  collectionId</span><span style="color:#717980">: </span><span style="color:#f6ea54">String</span></div>
<div class="code" style="left:1747.6px;top:789.9px;font-size:26.5px;line-height:26.5px;letter-spacing:1.50px;"><span style="color:#5bb679">  owner</span><span style="color:#717980">: </span><span style="color:#f6ea54">String</span></div>
<div class="code" style="left:1747.6px;top:834.7px;font-size:26.5px;line-height:26.5px;letter-spacing:1.50px;"><span style="color:#5bb679">  creator</span><span style="color:#717980">: </span><span style="color:#f6ea54">String</span><span style="color:#555e67">!</span></div>
<div class="code" style="left:1747.6px;top:879.5px;font-size:26.5px;line-height:26.5px;letter-spacing:1.50px;"><span style="color:#5bb679">  offchainData</span><span style="color:#717980">: </span><span style="color:#f6ea54">String</span><span style="color:#555e67">!</span></div>
<div class="code" style="left:1747.6px;top:924.3px;font-size:26.5px;line-height:26.5px;letter-spacing:1.50px;"><span style="color:#5bb679">  royalty</span><span style="color:#717980">: </span><span style="color:#f6ea54">Float</span><span style="color:#555e67">!</span></div>
<div class="code" style="left:1747.6px;top:969.1px;font-size:26.5px;line-height:26.5px;letter-spacing:1.50px;"><span style="color:#5bb679">  mintFee</span><span style="color:#717980">: </span><span style="color:#f6ea54">String</span><span style="color:#555e67">!</span></div>
<div class="code" style="left:1747.6px;top:1013.9px;font-size:26.5px;line-height:26.5px;letter-spacing:1.50px;"><span style="color:#5bb679">  mintFeeRounded</span><span style="color:#717980">: </span><span style="color:#f6ea54">Float</span></div>
<div class="code" style="left:1747.6px;top:1058.7px;font-size:26.5px;line-height:26.5px;letter-spacing:1.50px;"><span style="color:#5bb679">  isCapsule</span><span style="color:#717980">: </span><span style="color:#f6ea54">Boolean</span><span style="color:#555e67">!</span></div>
<div class="code" style="left:1747.6px;top:1103.5px;font-size:26.5px;line-height:26.5px;letter-spacing:1.50px;"><span style="color:#5bb679">  isSecret</span><span style="color:#717980">: </span><span style="color:#f6ea54">Boolean</span><span style="color:#555e67">!</span></div>
<div class="code" style="left:1747.6px;top:1148.3px;font-size:26.5px;line-height:26.5px;letter-spacing:1.50px;"><span style="color:#5bb679">  delegatee</span><span style="color:#717980">: </span><span style="color:#f6ea54">String</span></div>
<div class="code" style="left:1747.6px;top:1193.1px;font-size:26.5px;line-height:26.5px;letter-spacing:1.50px;"><span style="color:#5bb679">  isDelegated</span><span style="color:#717980">: </span><span style="color:#f6ea54">Boolean</span><span style="color:#555e67">!</span></div>
<div class="code" style="left:1747.6px;top:1237.9px;font-size:26.5px;line-height:26.5px;letter-spacing:1.50px;"><span style="color:#5bb679">  isSoulbound</span><span style="color:#717980">: </span><span style="color:#f6ea54">Boolean</span><span style="color:#555e67">!</span></div>
<div class="code" style="left:1747.6px;top:1282.7px;font-size:26.5px;line-height:26.5px;letter-spacing:1.50px;"><span style="color:#5bb679">  listedForSale</span><span style="color:#717980">: </span><span style="color:#f6ea54">Boolean</span><span style="color:#555e67">!</span></div>
<div class="code" style="left:1747.6px;top:1327.5px;font-size:26.5px;line-height:26.5px;letter-spacing:1.50px;"><span style="color:#5bb679">  price</span><span style="color:#717980">: </span><span style="color:#f6ea54">String</span></div>
<div class="code" style="left:1747.6px;top:1372.3px;font-size:26.5px;line-height:26.5px;letter-spacing:1.50px;"><span style="color:#5bb679">  priceRounded</span><span style="color:#717980">: </span><span style="color:#f6ea54">Float</span></div>
<div class="code" style="left:1747.6px;top:1417.1px;font-size:26.5px;line-height:26.5px;letter-spacing:1.50px;"><span style="color:#5bb679">  marketplaceId</span><span style="color:#717980">: </span><span style="color:#f6ea54">String</span></div>
<div class="code" style="left:1747.6px;top:1461.9px;font-size:26.5px;line-height:26.5px;letter-spacing:1.50px;"><span style="color:#5bb679">  createdAt</span><span style="color:#717980">: </span><span style="color:#f6ea54">Datetime</span><span style="color:#555e67">!</span></div>
<div class="code" style="left:1747.6px;top:1506.7px;font-size:26.5px;line-height:26.5px;letter-spacing:1.50px;"><span style="color:#5bb679">  updatedAt</span><span style="color:#717980">: </span><span style="color:#f6ea54">Datetime</span><span style="color:#555e67">!</span></div>
<div class="code" style="left:1747.6px;top:1551.5px;font-size:26.5px;line-height:26.5px;letter-spacing:1.50px;"><span style="color:#5bb679">  timestampCreate</span><span style="color:#717980">: </span><span style="color:#f6ea54">Datetime</span><span style="color:#555e67">!</span></div>
<div class="code" style="left:1747.6px;top:1596.3px;font-size:26.5px;line-height:26.5px;letter-spacing:1.50px;"><span style="color:#5bb679">  timestampBurn</span><span style="color:#717980">: </span><span style="color:#f6ea54">Datetime</span></div>
<div class="code" style="left:1747.6px;top:1641.1px;font-size:26.5px;line-height:26.5px;letter-spacing:1.50px;"><span style="color:#5bb679">  timestampList</span><span style="color:#717980">: </span><span style="color:#f6ea54">Datetime</span></div>
<div class="code" style="left:1747.6px;top:1730.7px;font-size:26.5px;line-height:26.5px;letter-spacing:1.50px;"><span style="color:#636b73">  # Reads a single `CollectionEntity` that is related to this `Nf</span></div>
<div style="left:43.4px;top:1743.1px;font-size:28px;line-height:28px;color:#565e65;letter-spacing:1.5px;transform:scaleX(0.9196);transform-origin:0 0;-webkit-text-stroke:0.85px;">QUERY VARIABLES</div>
<div style="left:325.4px;top:1743.1px;font-size:28px;line-height:28px;color:#9ea3a7;letter-spacing:1.5px;transform:scaleX(0.9094);transform-origin:0 0;-webkit-text-stroke:0.85px;">HTTP HEADERS</div>
<svg style="left:0;top:0" width="2880" height="1800"><path d="M1427.300 1122.400L1625 947.500" stroke="#e84126" stroke-width="5" fill="none"/><path d="M1640.600 933.400L1614.500 940.200L1629.900 958.200Z" fill="#e84126"/></svg>
</div></body></html>
